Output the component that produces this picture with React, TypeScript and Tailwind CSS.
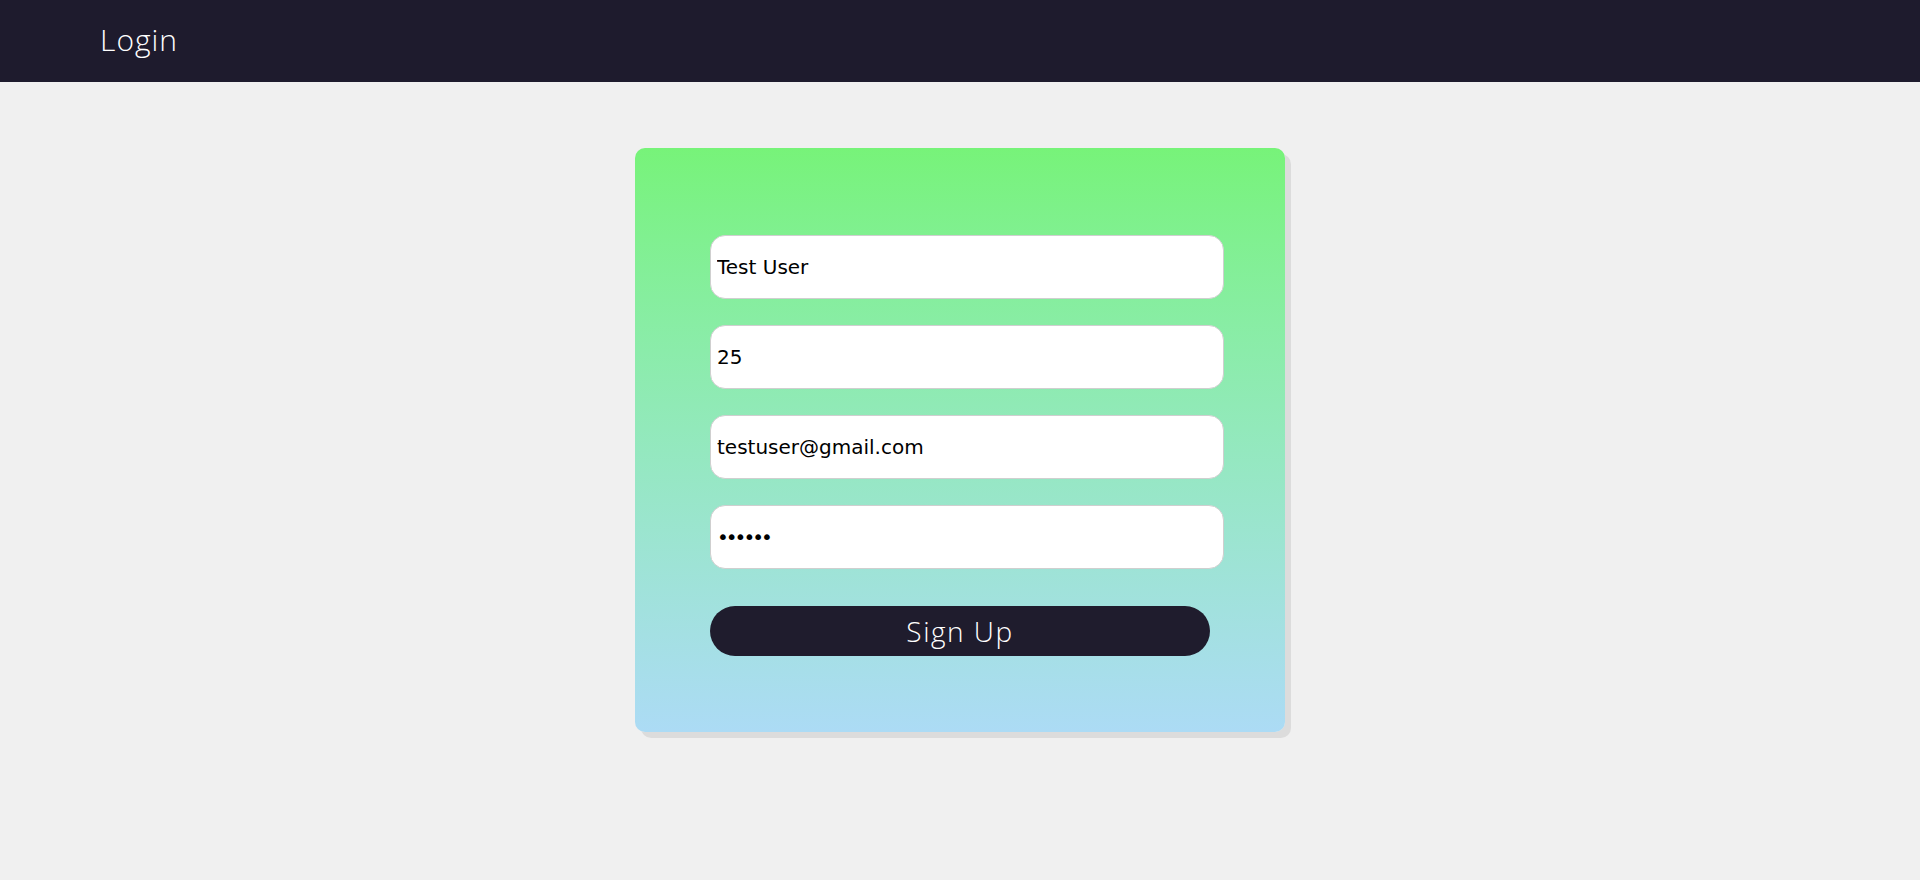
import React from "react";

export default function App() {
  const inputCls =
    "block w-[514px] h-[64px] rounded-[15px] border border-[#cfcfcf] bg-white pl-[6px] pr-2 text-[20px] text-black outline-none [font-family:'DejaVu_Sans',sans-serif]";
  return (
    <div className="min-h-[880px] bg-[#f0f0f0]">
      <header className="h-[82px] bg-[#1e1b2d] flex items-center pl-[100px]">
        <span className="text-white text-[30px] font-light leading-none tracking-[1px] [font-family:'Open_Sans',sans-serif] -mt-[2px]">
          Login
        </span>
      </header>
      <div className="flex justify-center pt-[66px]">
        <div className="w-[650px] rounded-[10px] bg-gradient-to-b from-[#77f379] to-[#acdbf5] shadow-[6px_6px_0_0_#dcdcdc] pt-[87px] pb-[76px] pl-[75px]">
          <div className="flex flex-col gap-[26px]">
            <input className={inputCls} defaultValue="Test User" readOnly />
            <input className={inputCls} defaultValue="25" readOnly />
            <input className={inputCls} defaultValue="testuser@gmail.com" readOnly />
            <input className={inputCls + " tracking-[-3px]"} type="password" defaultValue="123456" readOnly />
          </div>
          <button className="mt-[37px] block w-[500px] h-[50px] rounded-full bg-[#1f1c2d] text-white text-[28px] font-light leading-none tracking-[1.5px] [font-family:'Open_Sans',sans-serif]">
            Sign Up
          </button>
        </div>
      </div>
    </div>
  );
}
